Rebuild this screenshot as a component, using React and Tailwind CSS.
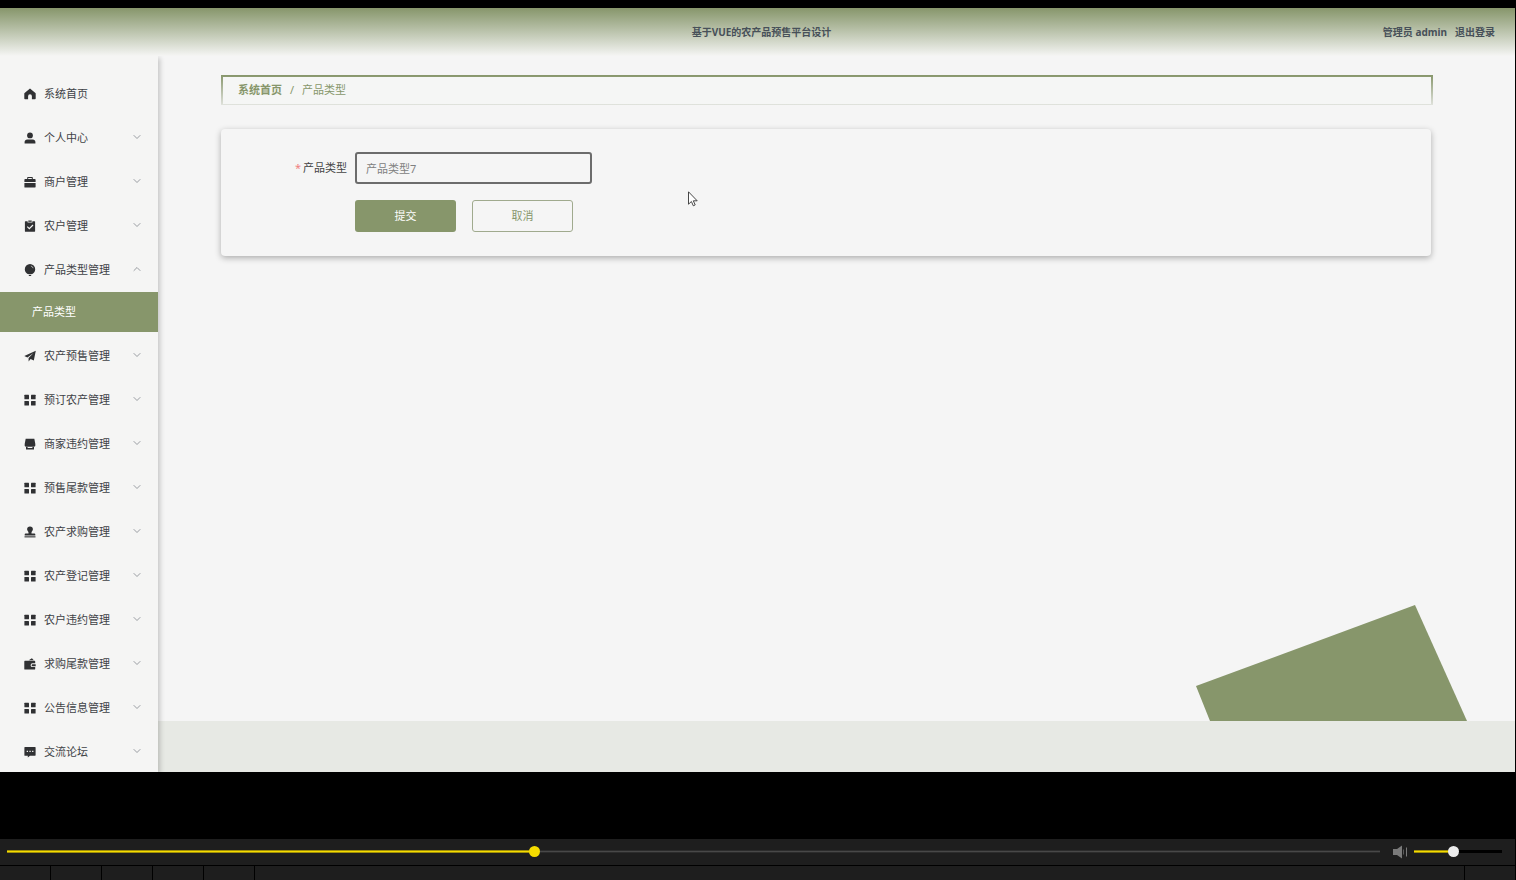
import { useState } from "react";
import clsx from "clsx";

const icons = {
  home: (
    <path d="M6 .6 11.4 5c.2.2.3.4.3.6v5c0 .4-.3.7-.7.7H7.9V8.2a1.9 1.9 0 0 0-3.8 0v3.1H1a.7.7 0 0 1-.7-.7v-5c0-.2.1-.4.3-.6L6 .6Z" />
  ),
  user: (
    <>
      <circle cx="6" cy="3.4" r="2.9" />
      <path d="M.6 11.5V10c0-1.500 1.200-2.500 2.600-2.500h5.600c1.400 0 2.600 1 2.600 2.500v1.500H.6Z" />
    </>
  ),
  briefcase: (
    <>
      <path d="M3.200 3V1.600c0-.4.3-.7.7-.7h4.200c.4 0 .7.3.7.7V3h2.100c.4 0 .7.3.7.7V6H.4V3.700c0-.4.3-.7.7-.7h2.100Zm1 0h3.600V1.900H4.200V3Z" />
      <path d="M.4 7h11.200v4c0 .3-.2.500-.5.500H.9a.5.500 0 0 1-.5-.5V7Z" />
    </>
  ),
  clipboard: (
    <>
      <path d="M1.400 1.300h2.200v1.200h4.800V1.300h2.200c.3 0 .5.2.5.500v9.400c0 .3-.2.500-.5.500H1.400a.5.500 0 0 1-.5-.5V1.800c0-.3.2-.5.5-.5Z" />
      <path d="M4.300.5h3.400v1.300H4.300z" />
      <path d="m3.300 6.700 2 2L9 5" fill="none" stroke="#f5f5f4" strokeWidth="1.200" />
    </>
  ),
  bulb: (
    <>
      <path d="M6 0a5.200 5.200 0 0 1 5.200 5.200c0 2.500-1.500 3.600-2.900 4.900H3.700C2.300 8.800.8 7.700.8 5.200A5.200 5.200 0 0 1 6 0Z" />
      <path d="M4.400 10.800h3.200L6.900 12H5.100z" />
      <path d="M6.900 2c1.200.3 1.900 1 2.200 2.200" fill="none" stroke="#f5f5f4" strokeWidth=".6" />
    </>
  ),
  plane: (
    <path d="M11.800.7 9.800 10.600 6.600 9 4.600 11.600V8L9.500 3 3.400 7.400.3 6.100 11.800.7Z" />
  ),
  grid: (
    <>
      <rect x=".4" y=".7" width="4.600" height="4.600" rx=".5" />
      <rect x="7" y=".7" width="4.600" height="4.600" rx=".5" />
      <rect x=".4" y="6.900" width="4.600" height="4.600" rx=".5" />
      <rect x="7" y="6.900" width="4.600" height="4.600" rx=".5" />
    </>
  ),
  shop: (
    <>
      <path d="M1.700.8h8.600L11.300 6v1.500c0 .7-.5 1.200-1.200 1.200H1.900c-.7 0-1.200-.5-1.200-1.200V6L1.700.8Z" />
      <path d="M2 9.100h1.200l.8.900h4l.8-.9H10v2.300H2z" />
    </>
  ),
  stamp: (
    <>
      <path d="M6 .4a2.900 2.900 0 0 1 2.900 2.800c0 1.500-1.400 2.100-1.400 3.300v.9h2.900c.5 0 .9.4.9.900v1.100H.7V8.300c0-.5.4-.9.900-.9h2.900v-.9C4.500 5.300 3.100 4.700 3.100 3.200A2.900 2.900 0 0 1 6 .4Z" />
      <path d="M.5 10.300h11v1.100H.5z" />
    </>
  ),
  wallet: (
    <>
      <path d="m4.700 2.300 3.200-2 1.900 2z" />
      <path d="M.9 2.800h9.700c.3 0 .6.3.6.6v1.900H8.500a1.900 1.900 0 0 0 0 3.800h2.700v1.800c0 .3-.3.6-.6.6H.9a.6.6 0 0 1-.6-.6V3.400c0-.3.3-.6.6-.6Z" />
      <path d="M8.600 6.200h3.100v2H8.600a1 1 0 0 1 0-2Z" />
    </>
  ),
  comment: (
    <>
      <path d="M.9 1h10.200c.3 0 .5.2.5.500v7.700c0 .3-.2.500-.5.500H6l-2.200 1.900V9.700H.9a.5.500 0 0 1-.5-.5V1.500C.4 1.200.6 1 .9 1Z" />
      <path d="M2.700 4.700h1.300V6H2.700zM5.400 4.700h1.300V6H5.400zM8.100 4.700h1.300V6H8.100z" fill="#f5f5f4" />
    </>
  ),
};

const menu = [
  { label: "系统首页", icon: "home", leaf: true },
  { label: "个人中心", icon: "user" },
  { label: "商户管理", icon: "briefcase" },
  { label: "农户管理", icon: "clipboard" },
  { label: "产品类型管理", icon: "bulb", children: ["产品类型"] },
  { label: "农产预售管理", icon: "plane" },
  { label: "预订农产管理", icon: "grid" },
  { label: "商家违约管理", icon: "shop" },
  { label: "预售尾款管理", icon: "grid" },
  { label: "农产求购管理", icon: "stamp" },
  { label: "农产登记管理", icon: "grid" },
  { label: "农户违约管理", icon: "grid" },
  { label: "求购尾款管理", icon: "wallet" },
  { label: "公告信息管理", icon: "grid" },
  { label: "交流论坛", icon: "comment" },
];

const Chevron = ({ up }) => (
  <svg
    viewBox="0 0 8 6"
    className={clsx("w-2 h-1.5 mb-0.5", up && "rotate-180")}
    fill="none"
    stroke="#909399"
    strokeWidth="0.9"
    aria-hidden="true"
  >
    <path d="M.7 1.200 4 4.500l3.300-3.300" />
  </svg>
);

const MenuItem = ({ item }) => (
  <li>
    <button
      type="button"
      aria-expanded={item.leaf ? undefined : Boolean(item.children)}
      className="flex h-11 w-full items-center pl-6 pr-[17px] text-left"
    >
      <svg viewBox="0 0 12 12" className="mr-2 h-3 w-3 shrink-0" fill="#303133" aria-hidden="true">
        {icons[item.icon]}
      </svg>
      <span className="flex-1 whitespace-nowrap">{item.label}</span>
      {!item.leaf && <Chevron up={Boolean(item.children)} />}
    </button>
    {item.children && (
      <ul className="mb-0.5">
        {item.children.map((child) => (
          <li key={child}>
            <a href="#" className="flex h-10 items-center bg-[#87966b] pl-8 text-white">
              {child}
            </a>
          </li>
        ))}
      </ul>
    )}
  </li>
);

const Header = () => (
  <header className="z-20 grid h-12 shrink-0 grid-cols-[1fr_auto_1fr] items-center bg-linear-to-b from-[#87966b] to-[#f5f5f4] pl-7 pr-5 text-[10px] font-bold text-[#475059]">
    <h1 className="col-start-2">基于VUE的农产品预售平台设计</h1>
    <div className="flex justify-end gap-2">
      <span>管理员 admin</span>
      <a href="#">退出登录</a>
    </div>
  </header>
);

const Breadcrumb = () => (
  <nav
    aria-label="breadcrumb"
    className="mr-[82px] flex h-[30px] items-center gap-2 border-2 border-b bg-[#f5f6f5] px-[15px] text-[#87966b] [border-image:linear-gradient(#87966b,#e2e4df)_2]"
  >
    <a href="#" className="font-bold">
      系统首页
    </a>
    <span>/</span>
    <span>产品类型</span>
  </nav>
);

const TypeForm = () => {
  const [type, setType] = useState("产品类型7");

  return (
    <form
      onSubmit={(e) => e.preventDefault()}
      className="mr-[84px] mt-6 rounded bg-[#f5f5f5] pb-6 pt-[23px] shadow-[0_2px_6px_rgba(0,0,0,0.3)]"
    >
      <div className="flex items-center">
        <label htmlFor="type" className="w-[134px] pr-2 text-right text-[#444444]">
          <span className="mr-0.5 text-[#f08080]">*</span>
          产品类型
        </label>
        <input
          id="type"
          value={type}
          onChange={(e) => setType(e.target.value)}
          className="h-8 w-[237px] rounded-[3px] border-2 border-[#6c6c6c] bg-transparent px-[9px] text-[#808080] outline-none"
        />
      </div>
      <div className="mt-4 flex gap-4 pl-[134px]">
        <button type="submit" className="h-8 w-[101px] rounded-[3px] bg-[#87966b] text-white">
          提交
        </button>
        <button
          type="button"
          className="h-8 w-[101px] rounded-[3px] border border-[#a0aa8e] text-[#87966b]"
        >
          取消
        </button>
      </div>
    </form>
  );
};

// bright 1px core over a dimmer 3px line, split where the thumb stands
const trackStyle = (percent, rest, restCore) => ({
  backgroundImage: `linear-gradient(to right, #f5dc00 ${percent}%, ${restCore} ${percent}%), linear-gradient(to right, #a08f08 ${percent}%, ${rest} ${percent}%)`,
  backgroundSize: "100% 1px, 100% 3px",
  backgroundPosition: "center",
  backgroundRepeat: "no-repeat",
});

const Player = () => {
  const [time, setTime] = useState(383);
  const [volume, setVolume] = useState(44);

  return (
    <footer className="shrink-0">
      <div className="flex h-[26px] items-center bg-[#1e1e1e] pb-px pl-[7px] pr-[13px]">
        <input
          type="range"
          aria-label="播放进度"
          min="0"
          max="1000"
          value={time}
          onChange={(e) => setTime(Number(e.target.value))}
          style={trackStyle(time / 10, "#2c2c2c", "#484848")}
          className="h-[11px] min-w-0 flex-1 appearance-none [&::-webkit-slider-thumb]:size-[11px] [&::-webkit-slider-thumb]:appearance-none [&::-webkit-slider-thumb]:rounded-full [&::-webkit-slider-thumb]:bg-[#f5dc00]"
        />
        <svg viewBox="0 0 14 14" className="ml-[13px] mr-[7px] size-3.5 shrink-0" aria-hidden="true">
          <path d="M0 4h4l5-3.500v13L4 10H0z" fill="#7a7a7a" />
          <path d="M10.500 4.500v5" stroke="#5a5a5a" />
          <path d="M13.500 2.500v9" stroke="#7a7a7a" />
        </svg>
        <input
          type="range"
          aria-label="音量"
          value={volume}
          onChange={(e) => setVolume(Number(e.target.value))}
          style={trackStyle(volume, "#000000", "#000000")}
          className="h-[11px] w-[88px] appearance-none [&::-webkit-slider-thumb]:size-[11px] [&::-webkit-slider-thumb]:appearance-none [&::-webkit-slider-thumb]:rounded-full [&::-webkit-slider-thumb]:bg-[#ececec]"
        />
      </div>
      <div className="mt-px flex h-3.5 gap-px *:bg-[#1e1e1e]">
        <div className="w-[50px]" />
        <div className="w-[50px]" />
        <div className="w-[50px]" />
        <div className="w-[50px]" />
        <div className="w-[50px]" />
        <div className="flex-1" />
        <div className="w-[50px]" />
      </div>
    </footer>
  );
};

const App = () => {
  return (
    <div className="flex h-screen flex-col bg-black pr-px pt-2 font-['Noto_Sans','Noto_Sans_CJK_SC',sans-serif] text-[11px]">
      <div className="relative mb-[67px] flex min-h-0 flex-1 flex-col overflow-hidden bg-[#f5f5f5]">
        <Header />
        <div className="flex min-h-0 flex-1">
          <aside className="z-10 w-[158px] shrink-0 bg-[#f5f5f4] pt-4 text-[#404246] shadow-[2px_2px_5px_rgba(0,0,0,0.2)]">
            <ul>
              {menu.map((item) => (
                <MenuItem key={item.label} item={item} />
              ))}
            </ul>
          </aside>
          <main className="flex min-w-0 flex-1 flex-col">
            <div className="flex-1 pl-[63px] pt-[19px]">
              <Breadcrumb />
              <TypeForm />
            </div>
            <svg viewBox="0 0 271 116" className="mr-12 w-[271px] self-end" aria-hidden="true">
              <path d="M0 81 219 0l52 116H14z" fill="#87966b" />
            </svg>
            <div className="h-[51px] shrink-0 bg-[#e7e9e4]" />
          </main>
        </div>
        <svg
          viewBox="0 0 10 16"
          className="absolute left-[688px] top-[183px] h-4 w-2.5"
          fill="#ffffff"
          stroke="#333333"
          strokeWidth="0.9"
          aria-hidden="true"
        >
          <path d="M.5.800v12.400l2.900-2.700 1.900 4.300 1.900-.9-1.900-4.100h3.900z" />
        </svg>
      </div>
      <Player />
    </div>
  );
};

export default App;
